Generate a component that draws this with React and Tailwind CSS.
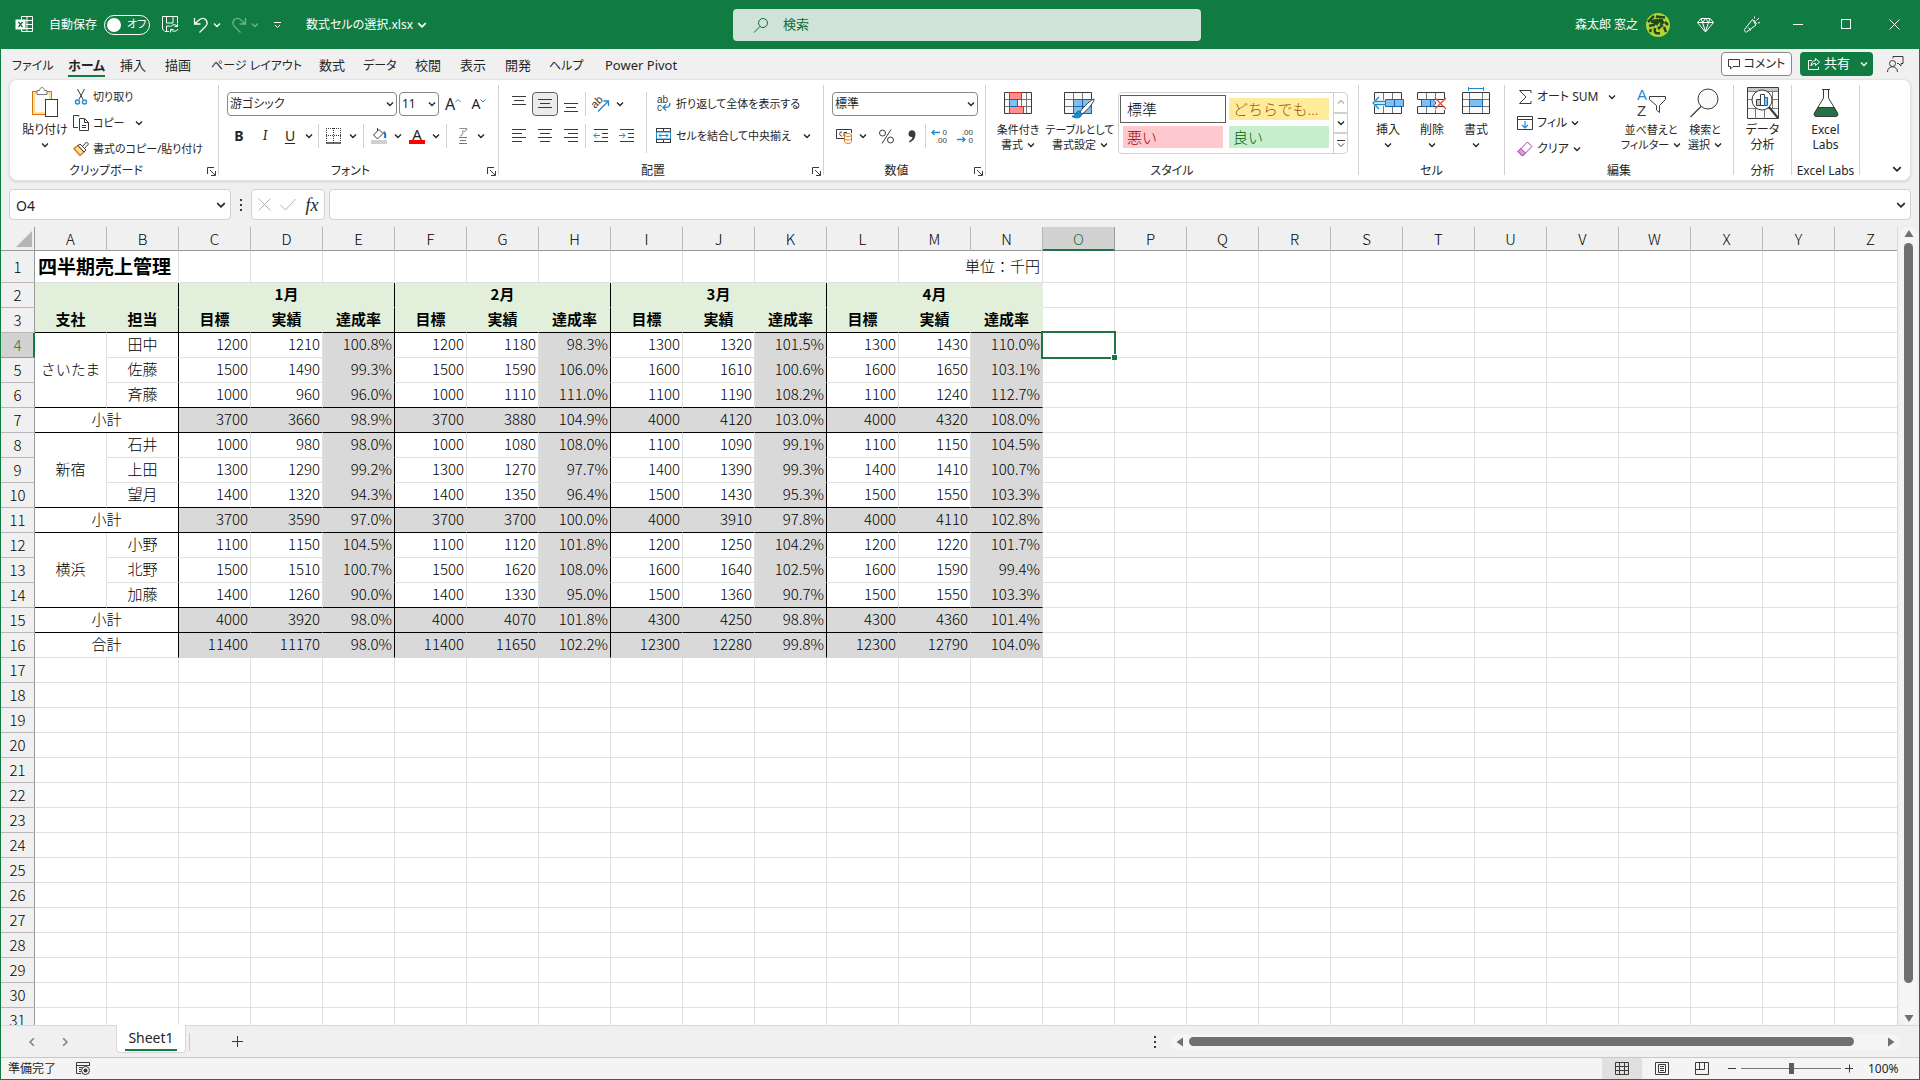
import React, { useState } from "react";
import clsx from "clsx";

const BRANCHES = [
  {
    name: "さいたま",
    members: [
      { name: "田中", values: [1200, 1210, 1200, 1180, 1300, 1320, 1300, 1430] },
      { name: "佐藤", values: [1500, 1490, 1500, 1590, 1600, 1610, 1600, 1650] },
      { name: "斉藤", values: [1000, 960, 1000, 1110, 1100, 1190, 1100, 1240] },
    ],
  },
  {
    name: "新宿",
    members: [
      { name: "石井", values: [1000, 980, 1000, 1080, 1100, 1090, 1100, 1150] },
      { name: "上田", values: [1300, 1290, 1300, 1270, 1400, 1390, 1400, 1410] },
      { name: "望月", values: [1400, 1320, 1400, 1350, 1500, 1430, 1500, 1550] },
    ],
  },
  {
    name: "横浜",
    members: [
      { name: "小野", values: [1100, 1150, 1100, 1120, 1200, 1250, 1200, 1220] },
      { name: "北野", values: [1500, 1510, 1500, 1620, 1600, 1640, 1600, 1590] },
      { name: "加藤", values: [1400, 1260, 1400, 1330, 1500, 1360, 1500, 1550] },
    ],
  },
];

const MONTHS = ["1月", "2月", "3月", "4月"];
const COLUMNS = "ABCDEFGHIJKLMNOPQRSTUVWXYZ".split("");

const TABS = [
  { label: "ファイル", width: "w-14 text-xs" },
  { label: "ホーム", width: "w-[52px] text-[13px]" },
  { label: "挿入", width: "w-[45px] text-[13px]" },
  { label: "描画", width: "w-[46px] text-[13px]" },
  { label: "ページ レイアウト", width: "w-[108px] text-xs" },
  { label: "数式", width: "w-[44px] text-[13px]" },
  { label: "データ", width: "w-[52px] text-xs" },
  { label: "校閲", width: "w-[45px] text-[13px]" },
  { label: "表示", width: "w-[45px] text-[13px]" },
  { label: "開発", width: "w-[44px] text-[13px]" },
  { label: "ヘルプ", width: "w-14 text-xs" },
  { label: "Power Pivot", width: "w-24 text-[13px]" },
];

const sumRows = (rows) =>
  rows[0].map((_, i) => rows.reduce((total, row) => total + row[i], 0));

/* ---------- Small shared pieces ---------- */

function Chevron({ size = 8, className = "" }) {
  return (
    <svg
      width={size}
      height={size}
      viewBox="0 0 8 8"
      fill="none"
      stroke="currentColor"
      strokeWidth="1.4"
      className={clsx("shrink-0", className)}
      aria-hidden="true"
    >
      <path d="M1 2.5 4 5.5 7 2.5" />
    </svg>
  );
}

function Svg({ w = 16, h = 16, className = "", children }) {
  return (
    <svg
      width={w}
      height={h}
      viewBox={`0 0 ${w} ${h}`}
      fill="none"
      stroke="#3b3a39"
      fontFamily="Liberation Sans, sans-serif"
      className={clsx("shrink-0 overflow-visible", className)}
      aria-hidden="true"
    >
      {children}
    </svg>
  );
}

function IconButton({ label, width = "w-[26px]", active, className, children }) {
  return (
    <button
      type="button"
      aria-label={label}
      className={clsx(
        "flex h-6 shrink-0 items-center justify-center rounded",
        width,
        active && "border border-[#605e5c] bg-[#ebebeb]",
        className
      )}
    >
      {children}
    </button>
  );
}

function DropButton({ label, width = "w-3" }) {
  return (
    <IconButton label={label} width={width}>
      <Chevron />
    </IconButton>
  );
}

function SmallSeparator({ className }) {
  return <span className={clsx("h-6 w-px shrink-0 bg-[#d1d1d1]", className)} />;
}

function GroupSeparator() {
  return <div className="mt-px h-[90px] w-px shrink-0 bg-[#d1d1d1]" />;
}

function Group({ title, width, launcher, children }) {
  return (
    <section className={clsx("flex shrink-0 flex-col", width)}>
      <div className="flex h-[78px]">{children}</div>
      <div className="flex h-[18px] items-center">
        <span className="flex-1 text-center whitespace-nowrap">{title}</span>
        {launcher && (
          <button type="button" aria-label={`${title}の設定`} className="w-4">
            <Svg w={9} h={9} className="ml-[5px]">
              <path d="M.5 7V.5H7M3 3l5 5M8.500 4v4.500H4" />
            </Svg>
          </button>
        )}
      </div>
    </section>
  );
}

function BigButton({ icon, lines, width, drop }) {
  const inline = lines.length > 1;
  return (
    <button
      type="button"
      className={clsx("flex shrink-0 flex-col items-center pt-[3px] leading-[15px]", width)}
    >
      <span className="flex h-[35px] items-start justify-center">{icon}</span>
      <span className="whitespace-nowrap">{lines[0]}</span>
      {inline && (
        <span className="flex items-center gap-1 whitespace-nowrap">
          {lines[1]}
          {drop && <Chevron />}
        </span>
      )}
      {!inline && drop && <Chevron className="mt-1" />}
    </button>
  );
}

function SmallButton({ icon, label, drop, gap = "ml-1" }) {
  return (
    <button type="button" className="flex h-[26px] items-center whitespace-nowrap">
      <span className="mr-1 flex w-4 justify-center">{icon}</span>
      {label}
      {drop && <Chevron className={gap} />}
    </button>
  );
}

function RibbonSelect({ label, value, width }) {
  return (
    <label
      className={clsx(
        "flex h-6 shrink-0 items-center rounded border border-[#8a8886] bg-white pr-0.5 pl-0.5",
        width
      )}
    >
      <select
        aria-label={label}
        defaultValue={value}
        className="min-w-0 flex-1 appearance-none bg-transparent outline-none"
      >
        <option>{value}</option>
      </select>
      <Chevron />
    </label>
  );
}

function Lines({ rows }) {
  return (
    <Svg>
      {rows.map(([x1, x2, y]) => (
        <path key={y} d={`M${x1} ${y}H${x2}`} />
      ))}
    </Svg>
  );
}

/* ---------- Title bar ---------- */

function TitleBar() {
  return (
    <header className="flex h-[49px] shrink-0 items-center bg-[#107c41] text-white">
      <div className="flex flex-1 items-center pl-4">
        <Svg w={17} h={17}>
          <g stroke="#fff">
            <path d="M5.500 4V.5h11v15h-11V13M11 .5v15M5.500 4.500h11M10 8.500h6.500M5.500 12.500h11" />
            <rect x="0" y="4" width="9" height="9" fill="#fff" />
            <path d="m2.500 6 4 5M6.500 6l-4 5" stroke="#107c41" strokeWidth="1.400" />
          </g>
        </Svg>
        <label className="ml-4 flex items-center gap-[7px]">
          自動保存
          <input type="checkbox" className="sr-only" />
          <span className="flex h-5 w-[46px] items-center gap-1.5 rounded-full border border-white pl-0.5">
            <span className="h-3.5 w-3.5 rounded-full bg-white" />
            <span className="text-[11px]">オフ</span>
          </span>
        </label>
        <button type="button" aria-label="上書き保存" className="ml-3">
          <Svg w={17} h={17}>
            <g stroke="#fff">
              <path d="M7 15.500H3L.5 13V.5h15V7M4.500.5V7H11V.5M4.500 15v-5H8" />
              <path d="M8.500 11a4 4 0 0 1 7-.5M15.500 7.500v3h-3M16 13a4 4 0 0 1-7 .5M8.500 16.500v-3h3" />
            </g>
          </Svg>
        </button>
        <button type="button" aria-label="元に戻す" className="ml-3.5 flex items-center gap-1">
          <Svg w={16}>
            <path stroke="#fff" strokeWidth="1.300" d="M1.500 1v6h6M1.500 7l4-3.500C8 1 11 .5 13 3c1.500 2 1.500 4.500-.5 6.500L6.500 15.500" />
          </Svg>
          <Chevron />
        </button>
        <button
          type="button"
          aria-label="やり直し"
          className="ml-2.5 flex items-center gap-1 opacity-40"
        >
          <Svg w={16}>
            <path stroke="#fff" strokeWidth="1.300" d="M14.500 1v6h-6M14.500 7l-4-3.500C8 1 5 .5 3 3c-1.500 2-1.500 4.500.5 6.500L9.500 15.500" />
          </Svg>
          <Chevron />
        </button>
        <button type="button" aria-label="クイック アクセスのカスタマイズ" className="ml-3.5">
          <Svg w={9} h={8}>
            <path stroke="#fff" d="M1 1.500h7M2 4l2.500 2.500L7 4" />
          </Svg>
        </button>
        <button type="button" className="ml-6 flex items-center gap-1 whitespace-nowrap">
          数式セルの選択.xlsx
          <Chevron size={10} />
        </button>
      </div>
      <label className="flex h-8 w-[468px] items-center rounded bg-[#cfe3d8] pl-5">
        <Svg className="mr-3.5">
          <g stroke="#0f6b38">
            <circle cx="10" cy="6" r="4.500" />
            <path d="m7 9.500-6 6" />
          </g>
        </Svg>
        <input
          type="search"
          placeholder="検索"
          aria-label="検索"
          className="flex-1 bg-transparent text-[13px] outline-none placeholder:text-[#0f6b38]"
        />
      </label>
      <div className="flex flex-1 items-center justify-end pr-0.5">
        <span className="mr-2">森太郎 窓之</span>
        <svg width="24" height="24" viewBox="0 0 24 24" className="mr-3" aria-hidden="true">
          <circle cx="12" cy="12" r="12" fill="#b5d334" />
          <path
            d="M2 9 8 3M10 3.500l9 1M5 9l5-2M7 13l5-7M10 12l4-5 4 3M3 13l4-1M16 6l-1 6M19 9l3 3M9 15c-1 5 1 6 5 5M12 14l2 2M18 14l2 5M5 16l-1 3M17 12l-3 2"
            fill="none"
            stroke="#1c4a1c"
            strokeWidth="2.500"
          />
        </svg>
        <button type="button" aria-label="Premium" className="flex w-[46px] justify-center">
          <Svg w={17}>
            <path stroke="#fff" d="M4 1.500h9l3.500 4-8 9.500L.5 5.500zM.5 5.500h16M5.500 5.500l3 9 3-9M4 1.500l1.500 4 3-4 3 4 1.500-4" />
          </Svg>
        </button>
        <button type="button" aria-label="新機能" className="flex w-[46px] justify-center">
          <Svg w={17} h={17}>
            <path stroke="#fff" d="M9.500 3.500 1.500 13.500c-.5 1 .5 3 2 2.500l9.500-7zM5.500 11.500l2 3M11 4l2.500 4M11.500 2.500v-2M13.500 4.500l2.500-2.500M15 7l2-.5" />
          </Svg>
        </button>
        <button type="button" aria-label="最小化" className="flex w-12 justify-center">
          <Svg w={11} h={11}>
            <path stroke="#fff" d="M0 5.500h10" />
          </Svg>
        </button>
        <button type="button" aria-label="最大化" className="flex w-12 justify-center">
          <Svg w={11} h={11}>
            <rect x=".5" y=".5" width="9" height="9" stroke="#fff" />
          </Svg>
        </button>
        <button type="button" aria-label="閉じる" className="flex w-12 justify-center">
          <Svg w={11} h={11}>
            <path stroke="#fff" d="m.5.5 10 10M10.500.5l-10 10" />
          </Svg>
        </button>
      </div>
    </header>
  );
}

function RibbonTabs() {
  const [current, setCurrent] = useState("ホーム");
  return (
    <nav className="flex h-[30px] shrink-0 pl-[11px] text-[13px]">
      {TABS.map((tab) => (
        <button
          key={tab.label}
          type="button"
          onClick={() => setCurrent(tab.label)}
          className={clsx(
            "flex shrink-0 items-start pt-[7px] leading-[19px] whitespace-nowrap",
            tab.width
          )}
        >
          <span
            className={clsx(
              "h-[21px]",
              current === tab.label && "border-b-2 border-[#107c41] font-bold"
            )}
          >
            {tab.label}
          </span>
        </button>
      ))}
      <div className="flex flex-1 items-center justify-end gap-2 pr-[15px]">
        <button
          type="button"
          className="flex h-6 w-[71px] items-center justify-center gap-1 rounded border border-[#8a8886] bg-white text-xs"
        >
          <Svg w={12} h={12}>
            <path d="M.5 1.500h11v7H5l-2.500 2.500V8.500h-2z" />
          </Svg>
          コメント
        </button>
        <button
          type="button"
          className="flex h-6 w-[73px] items-center rounded bg-[#107c41] pl-2 text-white"
        >
          <Svg w={12} h={12} className="mr-1">
            <path stroke="#fff" d="M4 2.500H.5v9h10V9M7.500.5l4 3.500-4 3.500V5.500C5.500 5.500 4 6 3 8c0-3 1.500-5 4.500-5.500z" />
          </Svg>
          共有
          <Chevron className="ml-2.5" />
        </button>
        <button type="button" aria-label="ユーザーのコメント" className="ml-1.5">
          <Svg w={17} h={17}>
            <circle cx="5.500" cy="7.500" r="3" />
            <path d="M.5 16c0-7 10-7 10 0M6 2.500V.5h10v7h-2V10l-2.500-2.500H10" />
          </Svg>
        </button>
      </div>
    </nav>
  );
}

/* ---------- Ribbon groups ---------- */

function ClipboardGroup() {
  return (
    <Group title="クリップボード" width="w-[208px]" launcher>
      <BigButton
        width="ml-2 w-[54px]"
        lines={["貼り付け"]}
        drop
        icon={
          <Svg w={28} h={31}>
            <rect x="1.500" y="4.500" width="19" height="23" fill="#fbdf9b" stroke="#d8730d" />
            <rect x="4" y="7" width="14" height="18" fill="#fafafa" stroke="none" />
            <path d="M6 7.500v-4h2.500c.5-4 4.500-4 5 0H16v4z" fill="#fff" stroke="#797774" />
            <rect x="14.500" y="12.500" width="12" height="17" fill="#fff" />
          </Svg>
        }
      />
      <div className="ml-px flex flex-col items-start text-[11px]">
        <SmallButton
          label="切り取り"
          icon={
            <Svg>
              <path d="m4.500 0 5.500 10.500M11.500 0 6 10.500" />
              <circle cx="4.500" cy="13" r="2" stroke="#1e8bcd" strokeWidth="1.400" />
              <circle cx="11.500" cy="13" r="2" stroke="#1e8bcd" strokeWidth="1.400" />
            </Svg>
          }
        />
        <SmallButton
          label="コピー"
          drop
          gap="ml-2.5"
          icon={
            <Svg>
              <path d="M6 1.500V.5H.5v12H5M6.500 3.500h5l4 4v8h-9zM11.500 3.500v4h4M9 10.500h4M9 12.500h4" />
            </Svg>
          }
        />
        <SmallButton
          label="書式のコピー/貼り付け"
          icon={
            <Svg>
              <path d="M1 7.500 5 4.500 11 11 7 14.500z" fill="#fbdf9b" stroke="#e07b12" strokeWidth="1.500" />
              <path d="m5 4.500 2-1.500 6 6-2 2zM9.500 5.500l4-4.500 2 2-4 4.500" fill="#fff" />
            </Svg>
          }
        />
      </div>
    </Group>
  );
}

function FontGroup() {
  return (
    <Group title="フォント" width="w-[279px]" launcher>
      <div className="flex flex-col pt-1">
        <div className="flex h-8 items-center pl-2">
          <RibbonSelect label="フォント" value="游ゴシック" width="w-[170px]" />
          <span className="w-0.5" />
          <RibbonSelect label="フォント サイズ" value="11" width="w-10" />
          <IconButton label="フォント サイズの拡大" width="w-7" className="text-base">
            A
            <Svg w={6} h={12}>
              <path stroke="#1e8bcd" d="m.5 4 2.500-2.500L5.500 4" />
            </Svg>
          </IconButton>
          <IconButton label="フォント サイズの縮小" width="w-6" className="text-sm">
            A
            <Svg w={6} h={12}>
              <path stroke="#1e8bcd" d="m.5 1.500 2.500 2.500 2.500-2.500" />
            </Svg>
          </IconButton>
        </div>
        <div className="flex h-8 items-center pl-[7px]">
          <IconButton label="太字" className="text-sm font-bold">B</IconButton>
          <IconButton label="斜体" className="font-serif text-sm italic">I</IconButton>
          <IconButton label="下線" width="w-6" className="text-sm underline underline-offset-2">U</IconButton>
          <DropButton label="下線の種類" width="w-3.5" />
          <SmallSeparator className="mx-0.5" />
          <IconButton label="罫線">
            <Svg>
              <path strokeDasharray="1 1" d="M0 .5h15M.5 0v15M14.500 0v15M7.500 0v15M0 7.500h15" />
              <path strokeWidth="1.500" d="M0 15h15" />
            </Svg>
          </IconButton>
          <DropButton label="罫線の種類" />
          <SmallSeparator className="mr-0.5 ml-1" />
          <IconButton label="塗りつぶしの色">
            <Svg>
              <path d="M2.500 7 8 1.500l4 4-5.500 5.500zM6.500 3V0" />
              <path d="M12.500 4c2 1 2 3.500 1.500 6" stroke="#1e6fb8" strokeWidth="2" />
              <path d="M0 14h16" stroke="#d0d0d0" strokeWidth="4" />
            </Svg>
          </IconButton>
          <DropButton label="塗りつぶしの色を選択" />
          <IconButton label="フォントの色" className="flex-col text-[15px] leading-3">
            A
            <span className="h-1 w-4 bg-[#ff0000]" />
          </IconButton>
          <DropButton label="フォントの色を選択" />
          <SmallSeparator className="mx-1" />
          <IconButton label="ふりがな" width="w-6" className="flex-col text-[10px] leading-[9px] text-[#797774]">
            ア
            <Svg w={9} h={7}>
              <path stroke="#797774" d="M0 .5h8M1 3.500h6M0 6.500h8" />
            </Svg>
          </IconButton>
          <DropButton label="ふりがなの設定" />
        </div>
      </div>
    </Group>
  );
}

function AlignmentGroup() {
  return (
    <Group title="配置" width="w-[324px]" launcher>
      <div className="flex flex-col pt-1">
        <div className="flex h-8 items-center pl-[7px]">
          <IconButton label="上揃え">
            <Lines rows={[[1, 15, 0.5], [3, 13, 4.5], [1, 15, 8.5]]} />
          </IconButton>
          <IconButton label="上下中央揃え" active>
            <Lines rows={[[1, 15, 3.5], [3, 13, 7.5], [1, 15, 11.5]]} />
          </IconButton>
          <IconButton label="下揃え">
            <Lines rows={[[1, 15, 7.5], [3, 13, 11.5], [1, 15, 15.5]]} />
          </IconButton>
          <SmallSeparator className="mr-0.5 ml-px" />
          <IconButton label="方向">
            <Svg>
              <text
                x="-1"
                y="10"
                fontSize="11"
                stroke="none"
                fill="#3b3a39"
                transform="rotate(-45 4 8)"
              >
                ab
              </text>
              <path stroke="#1e8bcd" strokeWidth="1.300" d="M5 15.500 15.500 5M10.500 5h5v5" />
            </Svg>
          </IconButton>
          <DropButton label="方向の設定" />
        </div>
        <div className="flex h-8 items-center pl-[7px]">
          <IconButton label="左揃え">
            <Lines rows={[[1, 15, 1.5], [1, 11, 5.5], [1, 15, 9.5], [1, 11, 13.5]]} />
          </IconButton>
          <IconButton label="中央揃え">
            <Lines rows={[[1, 15, 1.5], [3, 13, 5.5], [1, 15, 9.5], [3, 13, 13.5]]} />
          </IconButton>
          <IconButton label="右揃え">
            <Lines rows={[[1, 15, 1.5], [5, 15, 5.5], [1, 15, 9.5], [5, 15, 13.5]]} />
          </IconButton>
          <SmallSeparator className="mr-0.5 ml-px" />
          <IconButton label="インデントを減らす">
            <Svg>
              <path d="M1 1.500h14M9 5.500h6M9 9.500h6M1 13.500h14" />
              <path stroke="#1e8bcd" d="M7 7.500H1M3.500 5 1 7.500 3.500 10" />
            </Svg>
          </IconButton>
          <IconButton label="インデントを増やす">
            <Svg>
              <path d="M1 1.500h14M9 5.500h6M9 9.500h6M1 13.500h14" />
              <path stroke="#1e8bcd" d="M0 7.500h6M3.500 5 6 7.500 3.500 10" />
            </Svg>
          </IconButton>
        </div>
      </div>
      <span className="mt-2 ml-1.5 h-[61px] w-px bg-[#d1d1d1]" />
      <div className="ml-2 flex flex-col items-start pt-1 text-[11px]">
        <button type="button" className="flex h-8 items-center gap-1 whitespace-nowrap">
          <Svg w={17}>
            <text x="2" y="7" fontSize="10" stroke="none" fill="#3b3a39">ab</text>
            <text x="2" y="15" fontSize="10" stroke="none" fill="#3b3a39">c</text>
            <path stroke="#1e8bcd" strokeWidth="1.400" d="M15 7c0 4-2 4.500-7 4.500M11 8.500l-3 3 3 3" />
          </Svg>
          折り返して全体を表示する
        </button>
        <button type="button" className="flex h-8 items-center gap-1 whitespace-nowrap">
          <Svg w={17}>
            <rect x="1.500" y=".5" width="14" height="14" />
            <path d="M1.500 3.500h14M1.500 11.500h14M8.500.5v3M8.500 11.500v3" />
            <path stroke="#1e8bcd" d="M1.500 4h14v7h-14zM4 7.500h9M6 5.500l-2 2 2 2M11 5.500l2 2-2 2" />
          </Svg>
          セルを結合して中央揃え
          <Chevron className="ml-2" />
        </button>
      </div>
    </Group>
  );
}

function DecimalIcon({ top, bottom, left }) {
  return (
    <Svg w={17}>
      <text x="16" y="7" textAnchor="end" fontSize="8" stroke="none" fill="#3b3a39">{top}</text>
      <text x="16" y="15" textAnchor="end" fontSize="8" stroke="none" fill="#3b3a39">{bottom}</text>
      {left ? (
        <path stroke="#1e8bcd" strokeWidth="1.300" d="M9 4.500H1M3.500 2 1 4.500 3.500 7" />
      ) : (
        <path stroke="#1e8bcd" strokeWidth="1.300" d="M0 11.500h8M5.500 9 8 11.500 5.500 14" />
      )}
    </Svg>
  );
}

function NumberGroup() {
  return (
    <Group title="数値" width="w-[161px]" launcher>
      <div className="flex flex-col pt-1">
        <div className="flex h-8 items-center pl-2">
          <RibbonSelect label="表示形式" value="標準" width="w-[146px]" />
        </div>
        <div className="flex h-8 items-center pl-[7px]">
          <IconButton label="通貨表示形式">
            <Svg w={17}>
              <path d="M9 10.500H.5v-9h15V5M6 4C3 3 3 8.500 6 8M8 8V4.500h3" />
              <path fill="#fff" stroke="#e07b12" d="M8.500 7v6.500c0 2.500 7 2.500 7 0V7c0-2-7-2-7 0zM8.500 7c0 2 7 2 7 0M8.500 10.500c0 2 7 2 7 0" />
            </Svg>
          </IconButton>
          <DropButton label="通貨の選択" />
          <IconButton label="パーセント" className="ml-1">
            <Svg w={15} h={15}>
              <circle cx="3.500" cy="4" r="3" />
              <circle cx="11.500" cy="11" r="3" />
              <path d="M12 .5 3 14.500" />
            </Svg>
          </IconButton>
          <IconButton label="桁区切り">
            <Svg w={8} h={13}>
              <path stroke="none" fill="#3b3a39" d="M7.500 4c0 4-2 7-6 8.500L1 11c2-1 3-2 3.500-4C2 7.500.5 6 .5 4c0-5 7-5 7 0z" />
            </Svg>
          </IconButton>
          <SmallSeparator />
          <IconButton label="小数点以下の表示桁数を増やす">
            <DecimalIcon top="0" bottom=".00" left />
          </IconButton>
          <IconButton label="小数点以下の表示桁数を減らす">
            <DecimalIcon top=".00" bottom="0" />
          </IconButton>
        </div>
      </div>
    </Group>
  );
}

function StylesGroup() {
  return (
    <Group title="スタイル" width="w-[372px]">
      <div className="flex text-[11px]">
        <BigButton
          width="ml-1 w-14"
          lines={["条件付き", "書式"]}
          drop
          icon={
            <Svg w={28} h={28}>
              <path fill="#fafafa" d="M.5 5.500h27v21H.5z" />
              <path stroke="#797774" d="M5.500 6v20M17.500 6v20M22.500 6v20M1 12.500h26M1 19.500h26" />
              <path fill="#ff8f8f" stroke="#e0281c" d="M5.500 5.500h12v7h-12zM5.500 19.500h14v7h-14z" />
              <path fill="#83beec" stroke="#1168b3" d="M5.500 12.500h8v7h-8z" />
            </Svg>
          }
        />
        <BigButton
          width="w-[68px]"
          lines={["テーブルとして", "書式設定"]}
          drop
          icon={
            <Svg w={32} h={32}>
              <path fill="#fafafa" d="M.5 5.500h27v21H.5z" />
              <path stroke="#797774" d="M9.500 6v20M18.500 6v20M1 12.500h26M1 19.500h26" />
              <path fill="#83beec" stroke="#1168b3" d="M9.500 12.500h18v14h-18zM18.500 12.500v14M9.500 19.500h18" />
              <path fill="#fff" d="M30 12c-2 0-11 8-14 13l2 2c5-3 13-13 12-15z" />
              <path fill="#1e8bcd" stroke="#1168b3" d="M15.500 24c-3-.5-3 4-7.500 5.500 5 2.500 9 1.500 10-2.500z" />
            </Svg>
          }
        />
      </div>
      <div className="mt-2 ml-1 flex h-[62px] w-[230px] rounded border border-[#d1d1d1]">
        <div className="grid flex-1 grid-cols-2 gap-1.5 py-[5px] pr-1 pl-1 text-[15px] leading-[18px] font-light [font-feature-settings:normal]">
          <button
            type="button"
            className="h-[22px] bg-white pl-1 text-left text-black outline-1 outline-offset-2 outline-[#605e5c]"
          >
            標準
          </button>
          <button type="button" className="h-[22px] bg-[#ffeb9c] pl-1 text-left whitespace-nowrap text-[#9c5700]">
            どちらでも…
          </button>
          <button type="button" className="h-[22px] bg-[#ffc7ce] pl-1 text-left text-[#9c0006]">
            悪い
          </button>
          <button type="button" className="h-[22px] bg-[#c6efce] pl-1 text-left text-[#006100]">
            良い
          </button>
        </div>
        <div className="flex w-3.5 flex-col divide-y-2 divide-[#d1d1d1] border-l border-[#d1d1d1]">
          <button type="button" aria-label="前の行" className="flex flex-1 items-center justify-center text-[#b5b5b5]">
            <Chevron className="rotate-180" />
          </button>
          <button type="button" aria-label="次の行" className="flex flex-1 items-center justify-center">
            <Chevron />
          </button>
          <button type="button" aria-label="その他" className="flex flex-1 items-center justify-center">
            <Svg w={8} h={8}>
              <path d="M0 .5h8M1 3.500l3 3 3-3" />
            </Svg>
          </button>
        </div>
      </div>
    </Group>
  );
}

function CellsGroup() {
  return (
    <Group title="セル" width="w-[145px]">
      <BigButton
        width="ml-[7px] w-11"
        lines={["挿入"]}
        drop
        icon={
          <Svg w={32} h={28}>
            <path fill="#fafafa" d="M2.500 5.500h27v21h-27z" />
            <path stroke="#797774" d="M11.500 6v20M20.500 6v20" />
            <path fill="#83beec" stroke="#1168b3" d="M13.500 12.500h18v7h-18zM22.500 12.500v7" />
            <path fill="#fff" stroke="none" d="M0 13h13v6H0z" />
            <path stroke="#1e8bcd" strokeWidth="1.300" d="M7 10 1 16l6 6M2 14.500h12M2 17.500h12" />
          </Svg>
        }
      />
      <BigButton
        width="w-11"
        lines={["削除"]}
        drop
        icon={
          <Svg w={30} h={28}>
            <path fill="#fafafa" d="M.5 5.500h27v21H.5z" />
            <path stroke="#797774" d="M9.500 6v20M18.500 6v20" />
            <path fill="#fff" stroke="none" d="M0 12h5v8H0zM17 12h13v11H17z" />
            <path d="M.5 12.500h27M.5 19.500h27" />
            <path fill="#83beec" stroke="#1168b3" d="M4.500 12.500H16l3 3.500-3 3.500H4.500zM13.500 12.500v7" />
            <path stroke="#ee4a3f" strokeWidth="1.300" d="m18 11 11 11M29 11 18 22" />
          </Svg>
        }
      />
      <BigButton
        width="w-11"
        lines={["書式"]}
        drop
        icon={
          <Svg w={28} h={28}>
            <path stroke="#1e8bcd" d="M6.500 0v4M21.500 0v4M6.500 1.500h15" />
            <path fill="#fafafa" d="M.5 5.500h27v21H.5z" />
            <path stroke="#797774" d="M7.500 6v20M20.500 6v20M1 12.500h26M1 19.500h26" />
            <path fill="#83beec" stroke="#1168b3" d="M7.500 12.500h13v7h-13z" />
          </Svg>
        }
      />
    </Group>
  );
}

function EditingGroup() {
  return (
    <Group title="編集" width="w-[228px]">
      <div className="ml-3 flex w-[106px] flex-col items-start">
        <SmallButton
          label="オート SUM"
          drop
          gap="ml-2.5"
          icon={
            <Svg>
              <path d="M14 4V1.500H2.500L9 8l-6.500 6.500H14V12" />
            </Svg>
          }
        />
        <SmallButton
          label="フィル"
          drop
          icon={
            <Svg>
              <path d="M.5 1.500h15v13H.5zM.5 4.500h15" />
              <path stroke="#1e8bcd" strokeWidth="1.200" d="M8 6v7M5 10l3 3 3-3" />
            </Svg>
          }
        />
        <SmallButton
          label="クリア"
          drop
          icon={
            <Svg>
              <path fill="#fff" stroke="#a33ab0" d="M10.500 1 15 5.500 5.500 15 1 10.500z" />
              <path fill="#d9a0dd" stroke="#a33ab0" d="m4 7.500 4.500 4.500-3 3L1 10.500z" />
            </Svg>
          }
        />
      </div>
      <div className="flex text-[11px]">
        <BigButton
          width="w-14"
          lines={["並べ替えと", "フィルター"]}
          drop
          icon={
            <Svg w={29} h={30}>
              <text x="0" y="13" fontSize="15" stroke="none" fill="#1e8bcd">A</text>
              <text x="0" y="29" fontSize="15" stroke="none" fill="#3b3a39">Z</text>
              <path d="M12.500 9.500h16v3l-6 6v7l-3-2.500v-4.500l-7-6z" />
            </Svg>
          }
        />
        <BigButton
          width="w-[52px]"
          lines={["検索と", "選択"]}
          drop
          icon={
            <Svg w={30} h={31}>
              <circle cx="18" cy="12" r="10" fill="#fafafa" />
              <path d="M11 19.500.5 30" strokeWidth="1.200" />
            </Svg>
          }
        />
      </div>
    </Group>
  );
}

function Ribbon() {
  return (
    <div className="mx-2 flex h-[102px] shrink-0 rounded-lg border border-[#e4e4e4] bg-white pt-1 shadow">
      <ClipboardGroup />
      <GroupSeparator />
      <FontGroup />
      <GroupSeparator />
      <AlignmentGroup />
      <GroupSeparator />
      <NumberGroup />
      <GroupSeparator />
      <StylesGroup />
      <GroupSeparator />
      <CellsGroup />
      <GroupSeparator />
      <EditingGroup />
      <GroupSeparator />
      <Group title="分析" width="w-[57px]">
        <BigButton
          width="w-full"
          lines={["データ", "分析"]}
          icon={
            <Svg w={32} h={32}>
              <path fill="#fafafa" d="M.5.5h31v31H.5z" />
              <path fill="#c8c6c4" stroke="none" d="M1 1h30v3H1z" />
              <path stroke="#797774" d="M.5 4.500h31M.5 12.500h31M.5 21.500h31M8.500 22v10M17.500 22v10M25.500 5v16" />
              <circle cx="15" cy="13" r="10" fill="#fff" />
              <path fill="#c8c6c4" d="M9.500 12.500h4v6h-4z" />
              <path fill="#fff" d="M13.500 7.500h4v11h-4z" />
              <path fill="#83beec" stroke="#1168b3" d="M17.500 10.500h3v8h-3z" />
              <path strokeWidth="2" d="m22 20 9 11" />
            </Svg>
          }
        />
      </Group>
      <GroupSeparator />
      <Group title="Excel Labs" width="w-[67px]">
        <BigButton
          width="w-full"
          lines={["Excel", "Labs"]}
          icon={
            <Svg w={26} h={31}>
              <path d="M9 2.500h8M10.500 3v8L1.500 26c-1 2 0 3.500 2 3.500h19c2 0 3-1.500 2-3.500l-9-15V3" />
              <path fill="#217346" d="M5 20.500h16l3.500 6c.5 1.500 0 3-2 3h-19c-2 0-2.500-1.500-2-3z" />
            </Svg>
          }
        />
      </Group>
      <GroupSeparator />
      <div className="flex flex-1 items-end justify-end pr-2 pb-1.5">
        <button type="button" aria-label="リボンを折りたたむ">
          <Chevron size={10} />
        </button>
      </div>
    </div>
  );
}

function FormulaBar() {
  return (
    <div className="mx-2 mt-2 flex h-[31px] shrink-0 items-center">
      <label className="flex h-full w-[222px] items-center rounded border border-[#d1d1d1] bg-white pr-1 pl-1.5">
        <input
          aria-label="名前ボックス"
          defaultValue="O4"
          className="min-w-0 flex-1 bg-transparent pt-0.5 text-sm outline-none"
        />
        <Chevron size={10} />
      </label>
      <span className="flex w-5 justify-center">
        <Svg w={2} h={12}>
          <path strokeWidth="2" strokeDasharray="2 3" d="M1 0v12" />
        </Svg>
      </span>
      <div className="flex h-full w-[74px] items-center rounded border border-[#d1d1d1] bg-white">
        <button type="button" aria-label="キャンセル" className="flex w-6 justify-center">
          <Svg w={13} h={13}>
            <path stroke="#b5b5b5" d="m.5.5 12 12M12.500.5l-12 12" />
          </Svg>
        </button>
        <button type="button" aria-label="入力" className="flex w-6 justify-center">
          <Svg w={16} h={13}>
            <path stroke="#b5b5b5" d="m.5 7 5 5L15.500 1" />
          </Svg>
        </button>
        <button
          type="button"
          aria-label="関数の挿入"
          className="w-6 [font-family:'Liberation_Serif',serif] text-lg leading-5 italic"
        >
          fx
        </button>
      </div>
      <label className="ml-1 flex h-full flex-1 items-center rounded border border-[#d1d1d1] bg-white pr-1 pl-2">
        <input aria-label="数式バー" className="min-w-0 flex-1 bg-transparent text-sm outline-none" />
        <Chevron size={10} />
      </label>
    </div>
  );
}

/* ---------- Sheet ---------- */

function Cell({ span, rows, right, bottom, fill, className, children }) {
  // The grid line takes the colour of a filled cell unless a black rule is set
  const plain =
    fill === "green"
      ? "border-r-[#e2efda] border-b-[#e2efda] bg-[#e2efda]"
      : fill === "gray"
        ? "border-r-[#d9d9d9] border-b-[#d9d9d9] bg-[#d9d9d9]"
        : "border-r-[#e0e0e0] border-b-[#e0e0e0]";
  return (
    <td
      colSpan={span}
      rowSpan={rows}
      className={clsx(
        "border-r border-b p-0 pb-0.5 whitespace-nowrap",
        plain,
        right && "border-r-black!",
        bottom && "border-b-black!",
        className
      )}
    >
      {children}
    </td>
  );
}

function RowHeader({ n, active }) {
  return (
    <th
      scope="row"
      className={clsx(
        "border-r border-b p-0 text-center font-light",
        active
          ? "border-r-[#107c41] border-b-[#999] bg-[#d2d2d2] text-[#217346] shadow-[inset_-1px_0_#107c41]"
          : "border-r-[#999] border-b-[#b8b8b8] bg-[#f0f0f0]"
      )}
    >
      {n}
    </th>
  );
}

function EmptyCells({ from, selected }) {
  return COLUMNS.slice(from).map((col) => (
    <td key={col} className="relative border-r border-b border-[#e0e0e0] p-0">
      {col === selected && (
        <span className="absolute -inset-x-0.5 -top-0.5 -bottom-0.5 z-10 border-2 border-[#217346]">
          <span className="absolute -right-[3px] -bottom-[3px] h-1.5 w-1.5 border-t border-l border-white bg-[#217346]" />
        </span>
      )}
    </td>
  ));
}

function ValueCells({ values, bottom, shaded }) {
  return MONTHS.map((month, i) => {
    const [target, actual] = values.slice(i * 2, i * 2 + 2);
    const fill = shaded ? "gray" : undefined;
    return (
      <React.Fragment key={month}>
        <Cell fill={fill} bottom={bottom} className="pr-0.5 text-right">{target}</Cell>
        <Cell fill={fill} bottom={bottom} className="pr-0.5 text-right">{actual}</Cell>
        <Cell fill="gray" bottom={bottom} right={i < 3} className="pr-0.5 text-right">
          {((actual / target) * 100).toFixed(1)}%
        </Cell>
      </React.Fragment>
    );
  });
}

function Sheet() {
  const rows = [];
  let n = 4;
  const subtotals = [];

  BRANCHES.forEach((branch) => {
    branch.members.forEach((member, i) => {
      const last = i === branch.members.length - 1;
      rows.push(
        <tr key={n} className="h-[25px]">
          <RowHeader n={n} active={n === 4} />
          {i === 0 && (
            <Cell rows={branch.members.length} bottom className="text-center">{branch.name}</Cell>
          )}
          <Cell right bottom={last} className="text-center">{member.name}</Cell>
          <ValueCells values={member.values} bottom={last} />
          <EmptyCells from={14} selected={n === 4 ? "O" : null} />
        </tr>
      );
      n += 1;
    });
    const subtotal = sumRows(branch.members.map((m) => m.values));
    subtotals.push(subtotal);
    rows.push(
      <tr key={n} className="h-[25px]">
        <RowHeader n={n} />
        <Cell span={2} right bottom className="text-center">小計</Cell>
        <ValueCells values={subtotal} bottom shaded />
        <EmptyCells from={14} />
      </tr>
    );
    n += 1;
  });

  rows.push(
    <tr key={n} className="h-[25px]">
      <RowHeader n={n} />
      <Cell span={2} right className="text-center">合計</Cell>
      <ValueCells values={sumRows(subtotals)} shaded />
      <EmptyCells from={14} />
    </tr>
  );

  for (n = 17; n <= 31; n += 1) {
    rows.push(
      <tr key={n} className="h-[25px]">
        <RowHeader n={n} />
        <EmptyCells from={0} />
      </tr>
    );
  }

  return (
    <table className="w-max table-fixed border-separate border-spacing-0 bg-white [font-family:'Noto_Sans_CJK_JP',sans-serif] text-[15px] leading-[22px] font-light text-black [font-feature-settings:normal]">
      <colgroup>
        <col className="w-[34px]" />
        {COLUMNS.map((col) => (
          <col key={col} className="w-[72px]" />
        ))}
      </colgroup>
      <thead>
        <tr className="h-6">
          <th
            aria-label="すべて選択"
            className="border-r border-b border-[#999] bg-[#f0f0f0] p-0"
          >
            <Svg w={17} h={17} className="ml-3.5">
              <path d="M17 1v16H1z" fill="#b5b5b5" stroke="none" />
            </Svg>
          </th>
          {COLUMNS.map((col) => (
            <th
              key={col}
              scope="col"
              className={clsx(
                "border-r border-b p-0 text-center font-light",
                col === "O"
                  ? "border-r-[#999] border-b-[#217346] bg-[#d2d2d2] text-[#217346] shadow-[inset_0_-1px_#217346]"
                  : "border-r-[#b8b8b8] border-b-[#999] bg-[#f0f0f0]"
              )}
            >
              {col}
            </th>
          ))}
        </tr>
      </thead>
      <tbody>
        <tr className="h-8">
          <RowHeader n={1} />
          <Cell span={2} className="pl-[3px] text-[19px] font-bold">四半期売上管理</Cell>
          {COLUMNS.slice(2, 12).map((col) => (
            <Cell key={col} />
          ))}
          <Cell span={2} className="pr-0.5 text-right">単位：千円</Cell>
          <EmptyCells from={14} />
        </tr>
        <tr className="h-[25px] font-bold">
          <RowHeader n={2} />
          <Cell fill="green" />
          <Cell fill="green" right />
          {MONTHS.map((month, i) => (
            <Cell key={month} span={3} fill="green" right={i < 3} className="text-center">{month}</Cell>
          ))}
          <EmptyCells from={14} />
        </tr>
        <tr className="h-[25px] font-bold">
          <RowHeader n={3} />
          <Cell fill="green" bottom className="text-center">支社</Cell>
          <Cell fill="green" bottom right className="text-center">担当</Cell>
          {MONTHS.map((month, i) => (
            <React.Fragment key={month}>
              <Cell fill="green" bottom className="text-center">目標</Cell>
              <Cell fill="green" bottom className="text-center">実績</Cell>
              <Cell fill="green" bottom right={i < 3} className="text-center">達成率</Cell>
            </React.Fragment>
          ))}
          <EmptyCells from={14} />
        </tr>
        {rows}
      </tbody>
    </table>
  );
}

function Arrow({ direction }) {
  const shapes = {
    up: "M5 1 9.500 8H.5z",
    down: "M5 9 .5 2h9z",
    left: "M1.500 5 8 .5v9z",
    right: "M8.500 5 2 .5v9z",
  };
  return (
    <Svg w={10} h={10}>
      <path d={shapes[direction]} fill="#707070" stroke="none" />
    </Svg>
  );
}

function SheetTabs() {
  return (
    <div className="flex h-[33px] shrink-0 border-b border-[#c8c8c8]">
      <div className="flex w-[115px] items-center gap-[23px] border-t border-[#d9d9d9] pl-[26px] text-[#8a8886]">
        <Chevron size={10} className="rotate-90" />
        <Chevron size={10} className="-rotate-90" />
      </div>
      <button
        type="button"
        className="h-7 w-[70px] rounded-b border-x border-b border-[#d9d9d9] bg-white px-2 text-sm leading-[22px]"
      >
        <span className="block border-b-2 border-[#107c41] pt-px">Sheet1</span>
      </button>
      <div className="flex flex-1 items-center border-t border-[#d9d9d9]">
        <span className="ml-[3px] h-[18px] w-px bg-[#c8c8c8]" />
        <button type="button" aria-label="新しいシート" className="ml-[42px]">
          <Svg w={11} h={11}>
            <path d="M5.500 0v11M0 5.500h11" />
          </Svg>
        </button>
      </div>
      <div className="flex w-[765px] items-center border-t border-[#d9d9d9] pr-[19px]">
        <Svg w={2} h={12}>
          <path strokeWidth="2" strokeDasharray="2 3" d="M1 0v12" />
        </Svg>
        <div className="ml-[15px] flex h-4 flex-1 items-center gap-1 rounded-full bg-[#f5f5f5] px-1">
          <Arrow direction="left" />
          <div className="flex flex-1 pr-7">
            <div className="h-[9px] flex-1 rounded-full bg-[#707070]" />
          </div>
          <Arrow direction="right" />
        </div>
      </div>
    </div>
  );
}

function StatusBar() {
  return (
    <footer className="flex h-[21px] shrink-0 items-center bg-[#f4f4f4] pl-[7px]">
      <span>準備完了</span>
      <button type="button" aria-label="マクロの記録" className="ml-5">
        <Svg w={15} h={13}>
          <path d="M5 11.500H.5v-11h13V4M.5 3.500h13M3 5.500h3M3 7.500h2M3 9.500h2" />
          <circle cx="9.500" cy="8.500" r="4" fill="#f4f4f4" />
          <circle cx="9.500" cy="8.500" r="2" fill="#3b3a39" stroke="none" />
        </Svg>
      </button>
      <div className="flex flex-1 items-center justify-end">
        <button type="button" aria-label="標準表示" className="flex h-[21px] w-10 items-center justify-center bg-[#e0e0e0]">
          <Svg w={14} h={14}>
            <path d="M.5.5h13v12H.5zM.5 4.500h13M.5 8.500h13M4.500.5v12M9.500.5v12" />
          </Svg>
        </button>
        <button type="button" aria-label="ページ レイアウト表示" className="flex w-10 justify-center">
          <Svg w={14} h={14}>
            <path d="M.5.5h13v12H.5zM3.500 2.500h7v8h-7zM5 4.500h4M5 6.500h4M5 8.500h4" />
          </Svg>
        </button>
        <button type="button" aria-label="改ページ プレビュー" className="flex w-10 justify-center">
          <Svg w={14} h={14}>
            <path d="M.5.5h13v12H.5zM.5 7.500h9v-7M4.500.5v7" />
          </Svg>
        </button>
        <button type="button" aria-label="縮小" className="mr-1 ml-1.5">
          <Svg w={9} h={9}>
            <path d="M0 4.500h8" />
          </Svg>
        </button>
        <input
          type="range"
          aria-label="ズーム"
          className="h-px w-[100px] appearance-none bg-[#797774] [&::-webkit-slider-thumb]:h-[11px] [&::-webkit-slider-thumb]:w-[5px] [&::-webkit-slider-thumb]:appearance-none [&::-webkit-slider-thumb]:bg-[#5c5c5c]"
        />
        <button type="button" aria-label="拡大" className="ml-1">
          <Svg w={9} h={9}>
            <path d="M0 4.500h8M4.500.5v8" />
          </Svg>
        </button>
        <span className="w-[65px] pl-3.5">100%</span>
      </div>
    </footer>
  );
}

export default function App() {
  return (
    <div className="flex h-screen flex-col overflow-hidden bg-[#f0f0f0] [font-family:'Noto_Sans','Noto_Sans_CJK_JP',sans-serif] text-xs text-[#262626] [font-feature-settings:'palt']">
      <TitleBar />
      <div className="flex min-h-0 flex-1 flex-col border-x border-b border-[#107c41]">
        <RibbonTabs />
        <Ribbon />
        <FormulaBar />
        <main className="mt-[7px] flex min-h-0 flex-1">
          <div className="min-w-0 flex-1 overflow-hidden border-r border-[#d9d9d9]">
            <Sheet />
          </div>
          <div className="mx-0.5 flex w-[17px] flex-col items-center gap-1 rounded-full bg-[#f5f5f5] pt-0.5 pb-0.5">
            <Arrow direction="up" />
            <div className="w-[9px] flex-1 rounded-full bg-[#707070]" />
            <div className="h-[22px]" />
            <Arrow direction="down" />
          </div>
        </main>
        <SheetTabs />
        <StatusBar />
      </div>
    </div>
  );
}
